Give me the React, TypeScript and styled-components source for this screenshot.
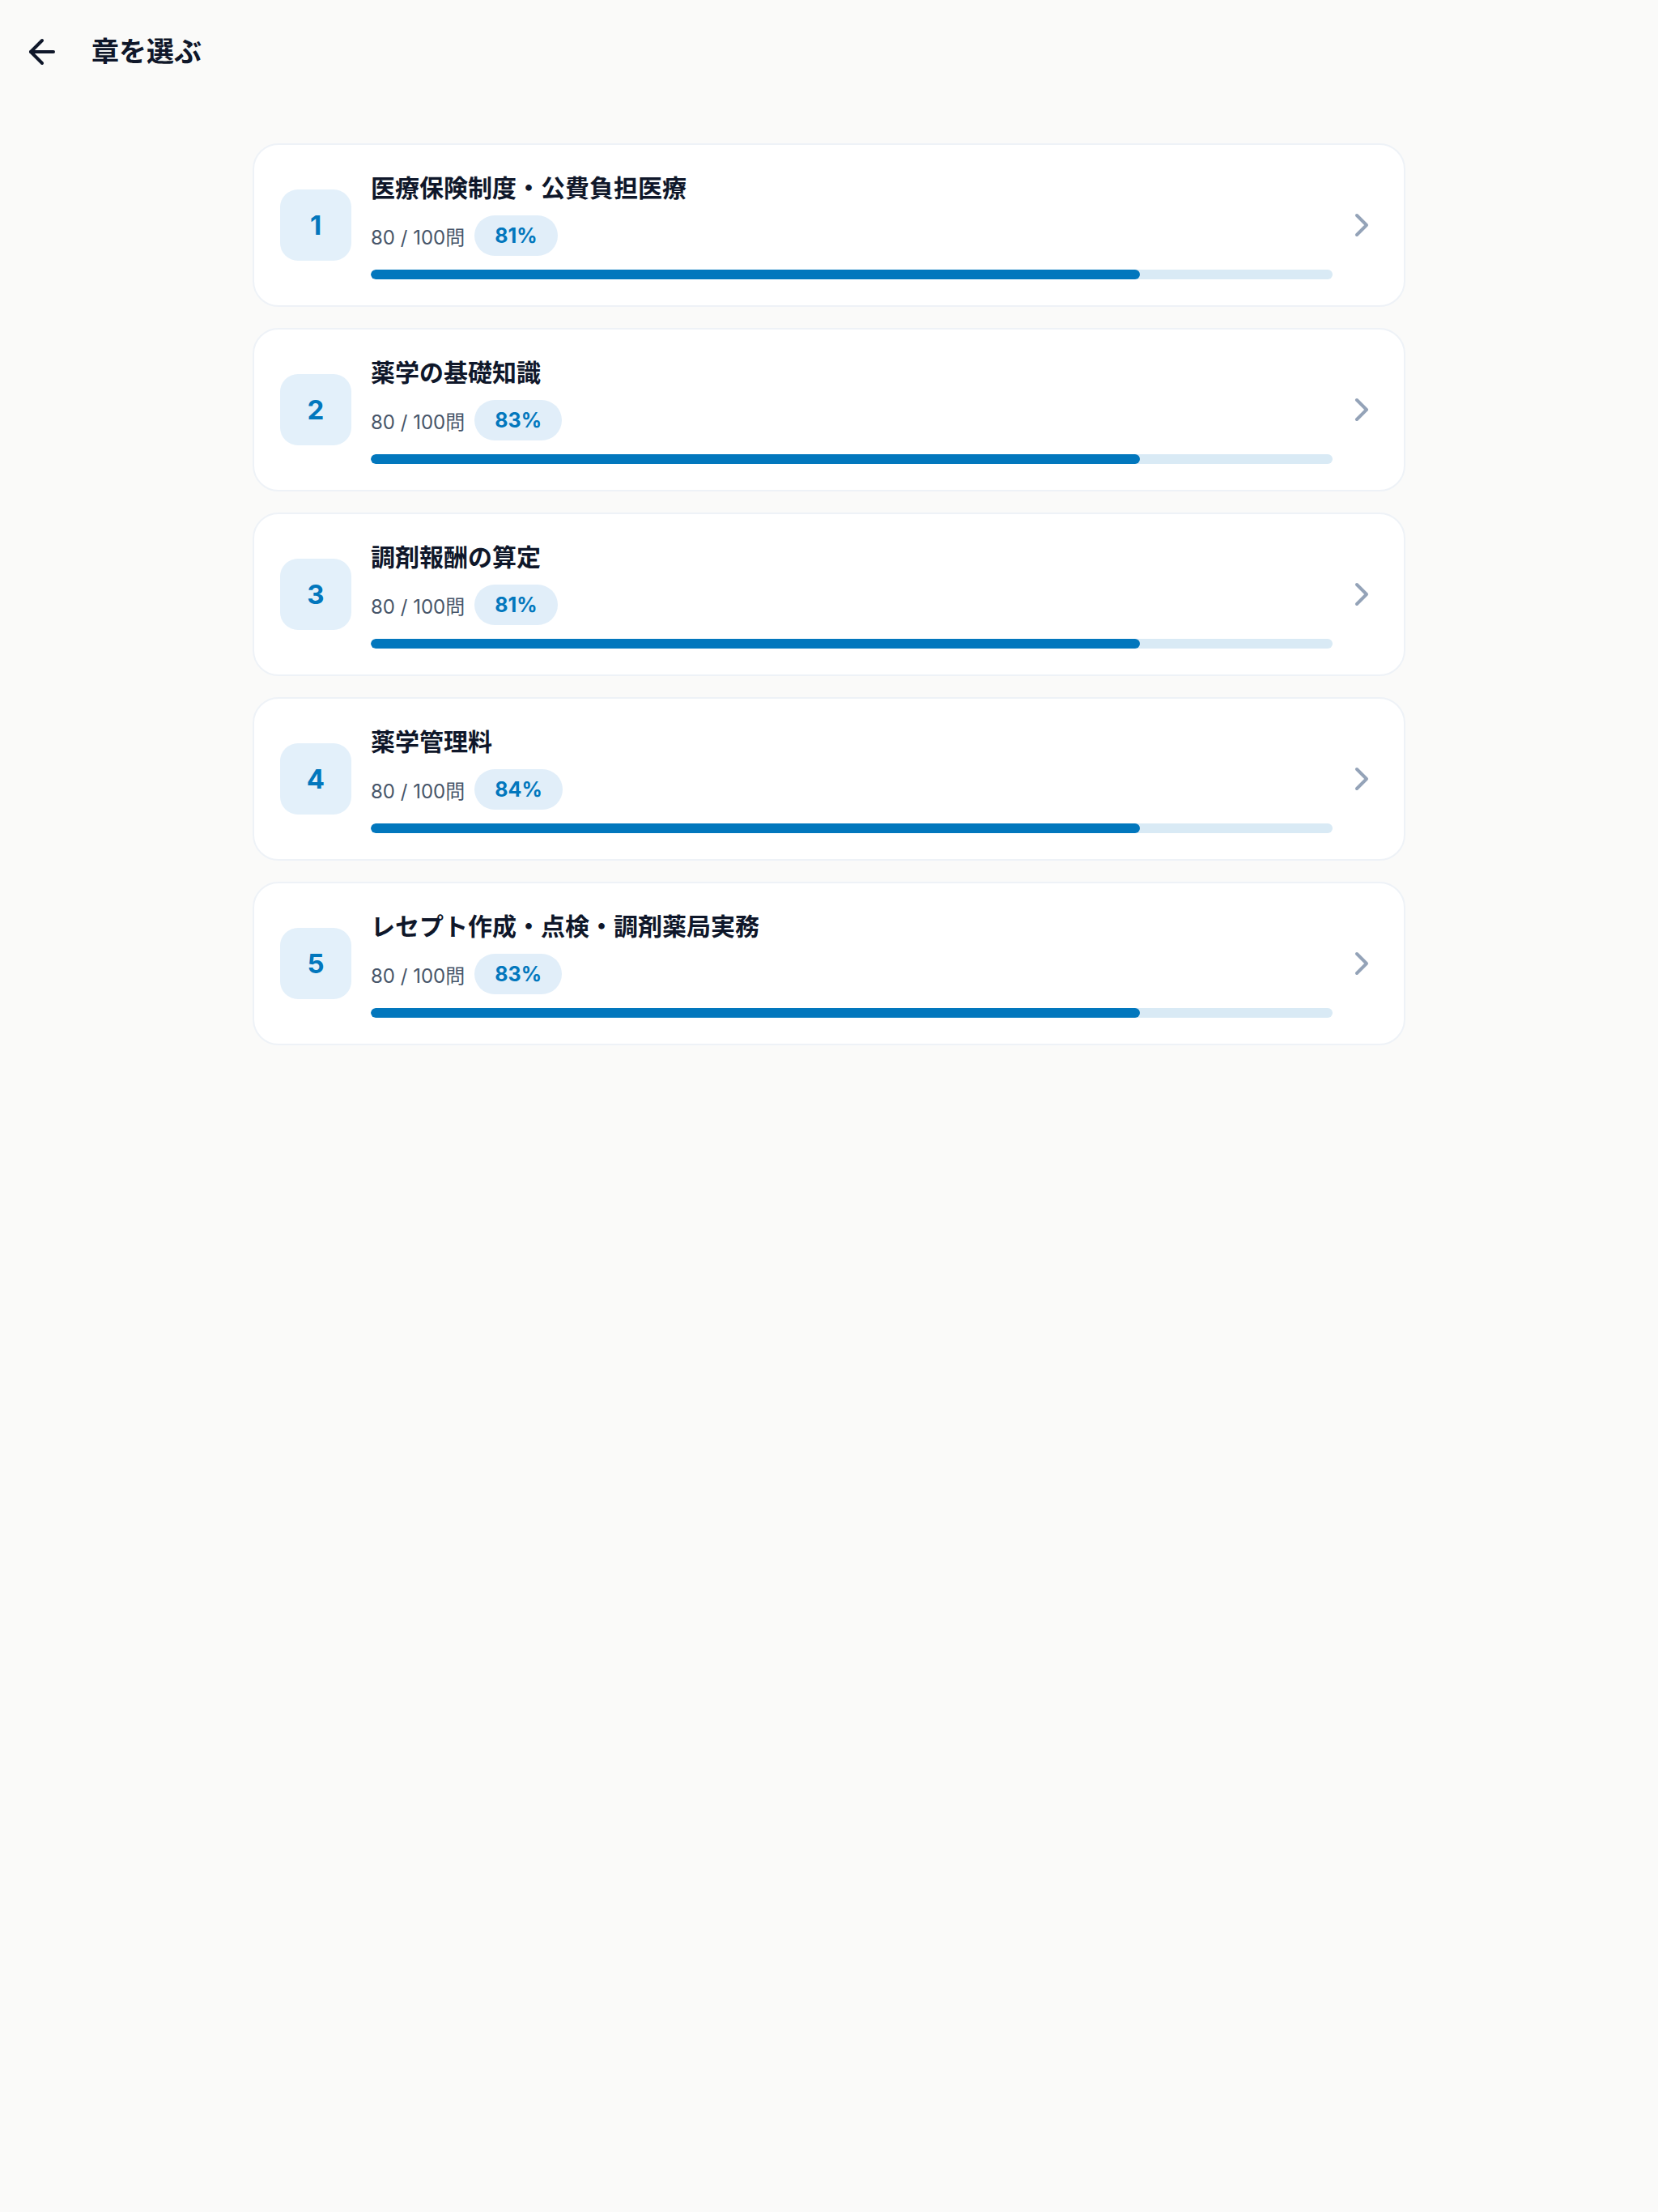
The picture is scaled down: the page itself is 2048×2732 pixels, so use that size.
import React from 'react';
import styled, { createGlobalStyle } from 'styled-components';
import { ArrowLeft, ChevronRight } from 'lucide-react';

const fontStack = `Inter, "Noto Sans CJK JP", "Noto Sans", sans-serif`;

const GlobalStyle = createGlobalStyle`
  html, body {
    margin: 0;
    padding: 0;
    background: #fafaf9;
  }
  body {
    font-family: ${fontStack};
    color: #0f172a;
    min-height: 100vh;
  }
`;

interface Chapter {
  no: number;
  title: string;
  done: number;
  total: number;
  rate: number;
}

const chapters: Chapter[] = [
  { no: 1, title: '医療保険制度・公費負担医療', done: 80, total: 100, rate: 81 },
  { no: 2, title: '薬学の基礎知識', done: 80, total: 100, rate: 83 },
  { no: 3, title: '調剤報酬の算定', done: 80, total: 100, rate: 81 },
  { no: 4, title: '薬学管理料', done: 80, total: 100, rate: 84 },
  { no: 5, title: 'レセプト作成・点検・調剤薬局実務', done: 80, total: 100, rate: 83 },
];

const Page = styled.div`
  min-height: 100vh;
  background: #fafaf9;
`;

const Header = styled.header`
  display: flex;
  align-items: center;
  gap: 37px;
  height: 128px;
  padding: 0 28px;
  box-sizing: border-box;
`;

const BackButton = styled.button`
  display: flex;
  align-items: center;
  justify-content: center;
  width: 48px;
  height: 48px;
  padding: 0;
  border: none;
  background: transparent;
  color: #0f172a;
  cursor: pointer;
`;

const PageTitle = styled.h1`
  margin: 0;
  font-size: 34px;
  font-weight: 700;
  line-height: 1;
  color: #0f172a;
`;

const List = styled.main`
  display: flex;
  flex-direction: column;
  gap: 26px;
  max-width: 1424px;
  margin: 49px auto 0;
`;

const Card = styled.div`
  display: flex;
  align-items: center;
  padding: 32px 28px 32px 32px;
  background: #ffffff;
  border: 2px solid #eef2f7;
  border-radius: 32px;
  cursor: pointer;
`;

const NumberBadge = styled.div`
  flex: none;
  display: flex;
  align-items: center;
  justify-content: center;
  width: 88px;
  height: 88px;
  margin-right: 24px;
  border-radius: 22px;
  background: #e3f0fa;
  color: #0277bd;
  font-size: 33px;
  font-weight: 700;
`;

const Body = styled.div`
  flex: 1;
  min-width: 0;
  display: flex;
  flex-direction: column;
`;

const ChapterTitle = styled.div`
  font-size: 30px;
  font-weight: 700;
  line-height: 43px;
  color: #0f172a;
`;

const Meta = styled.div`
  display: flex;
  align-items: center;
  gap: 12px;
  margin-top: 12px;
`;

const Count = styled.span`
  font-size: 24px;
  color: #475569;
`;

const RatePill = styled.span`
  display: inline-flex;
  align-items: center;
  height: 50px;
  padding: 0 25px;
  border-radius: 25px;
  background: #e1eef9;
  color: #0277bd;
  font-size: 25px;
  font-weight: 700;
`;

const Track = styled.div`
  margin-top: 17px;
  height: 12px;
  border-radius: 6px;
  background: #d9eaf5;
  overflow: hidden;
`;

const Fill = styled.div`
  height: 100%;
  border-radius: 6px;
  background: #0277bd;
`;

const Chevron = styled.div`
  flex: none;
  display: flex;
  margin-left: 12px;
  color: #94a3b8;
`;

const ChapterCard: React.FC<{ chapter: Chapter }> = ({ chapter }) => (
  <Card>
    <NumberBadge>{chapter.no}</NumberBadge>
    <Body>
      <ChapterTitle>{chapter.title}</ChapterTitle>
      <Meta>
        <Count>
          {chapter.done} / {chapter.total}問
        </Count>
        <RatePill>{chapter.rate}%</RatePill>
      </Meta>
      <Track>
        <Fill style={{ width: `${(chapter.done / chapter.total) * 100}%` }} />
      </Track>
    </Body>
    <Chevron>
      <ChevronRight size={48} strokeWidth={2} />
    </Chevron>
  </Card>
);

export default function App() {
  return (
    <Page>
      <GlobalStyle />
      <Header>
        <BackButton aria-label="戻る">
          <ArrowLeft size={48} strokeWidth={2} />
        </BackButton>
        <PageTitle>章を選ぶ</PageTitle>
      </Header>
      <List>
        {chapters.map((c) => (
          <ChapterCard key={c.no} chapter={c} />
        ))}
      </List>
    </Page>
  );
}
